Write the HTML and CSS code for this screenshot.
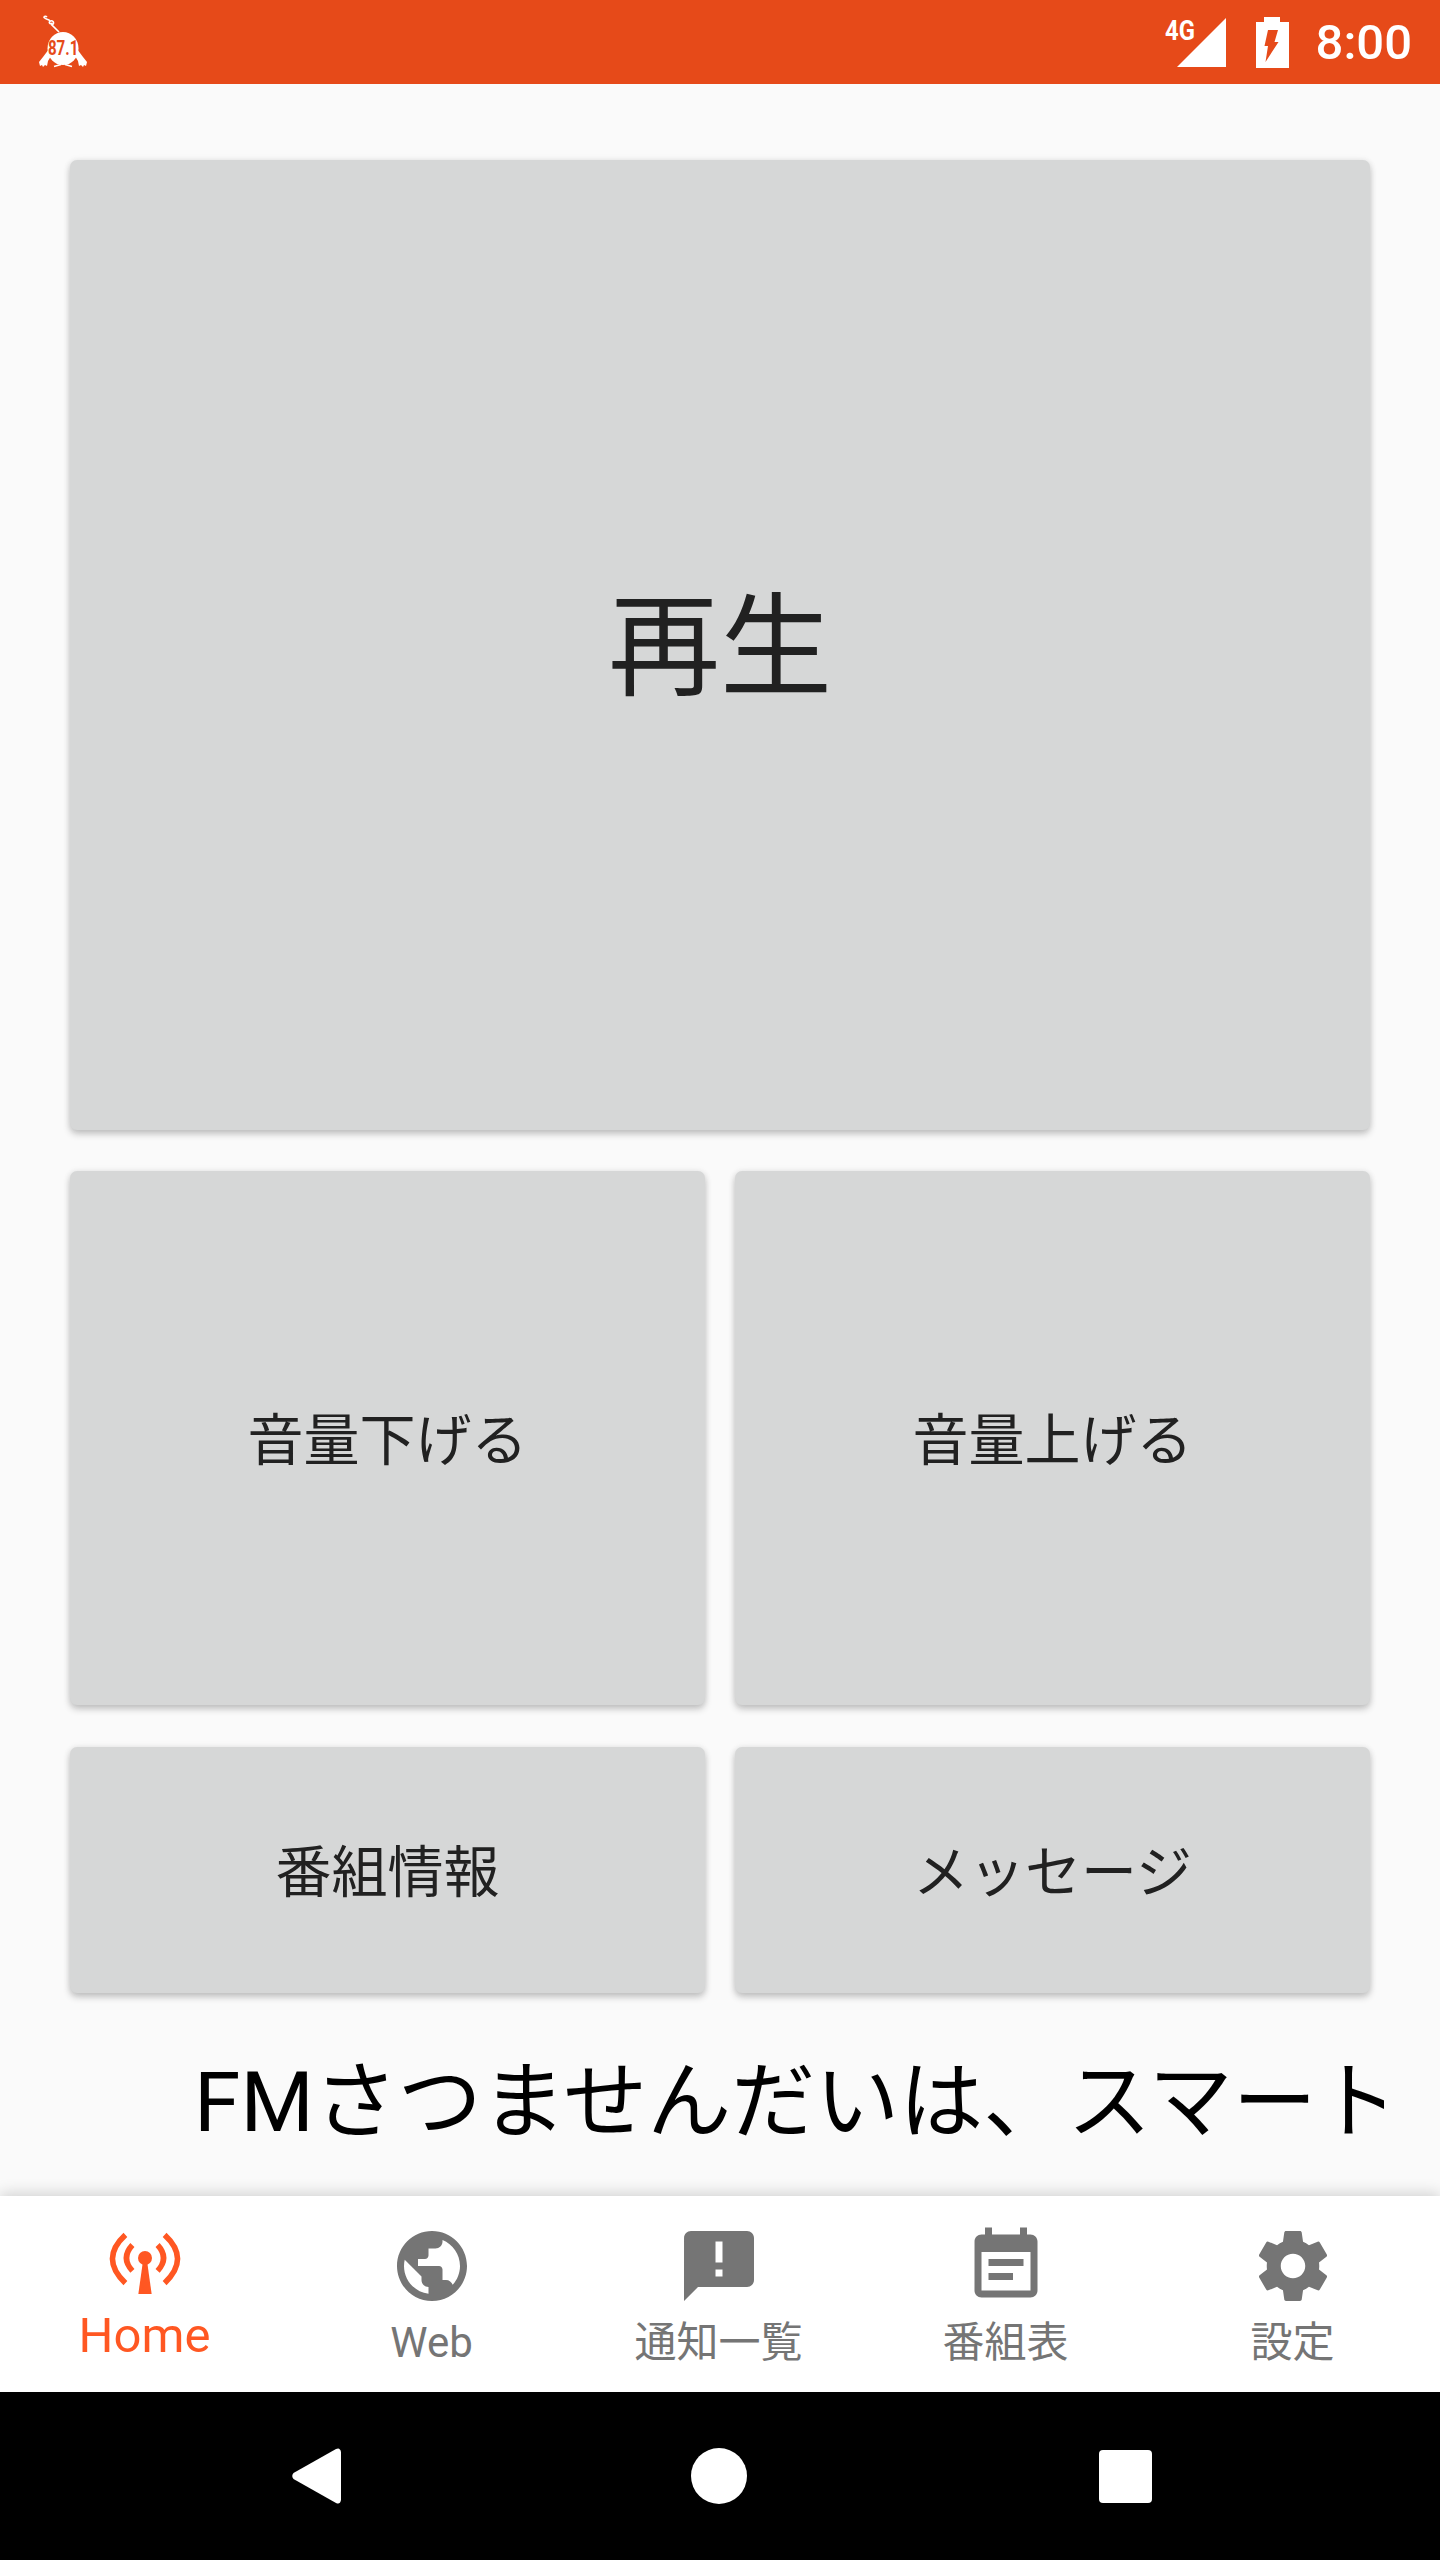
FILE: index.html
```html
<!DOCTYPE html>
<html lang="ja">
<head>
  <meta charset="UTF-8">
  <title>FMさつませんだい</title>
  <meta name="viewport" content="width=device-width, initial-scale=1">
  <link rel="stylesheet" href="styles.css">
</head>
<body>

  <div class="status-bar">
    <div class="status-logo">
      <svg class="logo-art" viewBox="0 0 60 60" width="60" height="60">
        <path class="logo-line" d="M26 20 L19 13 C22 11 20 8 17.5 9 C15 10 17 13 19 11 M17 9 C16 7 14 8 11 5.5 C11 4 13 4 14 5"/>
        <path class="logo-fill" d="M16 37 L10 45 L6 50 L7 54 L9 53 L10 55 L12 53 L14 54 L15 49 L18 44 Z"/>
        <path class="logo-fill" d="M44 37 L50 45 L54 50 L53 54 L51 53 L50 55 L48 53 L46 54 L45 49 L42 44 Z"/>
        <path class="logo-line" d="M21 54.5 L28 52.5 M39 54.5 L32 52.5"/>
        <ellipse class="logo-fill" cx="30" cy="36.5" rx="15.5" ry="16.5"/>
      </svg>
      <span class="logo-text">87.1</span>
    </div>
    <div class="status-right">
      <div class="signal">
        <span class="signal-type">4G</span>
        <svg viewBox="0 0 49 49" width="49" height="49"><path class="white" d="M0 49 L49 0 V49 Z"/></svg>
      </div>
      <svg class="battery" viewBox="0 0 33 51" width="33" height="51">
        <path class="white" d="M8 0 H24 V5 H33 V51 H0 V5 H8 Z"/>
        <path class="bolt" d="M12 13 H22 L18.5 25 H22.5 L9.5 45 L12 29 H8.5 Z"/>
      </svg>
      <span class="clock">8:00</span>
    </div>
  </div>

  <main class="content">
    <div class="button-grid">
      <button class="card play">再生</button>
      <button class="card mid">音量下げる</button>
      <button class="card mid">音量上げる</button>
      <button class="card low">番組情報</button>
      <button class="card low">メッセージ</button>
    </div>
    <div class="marquee">FMさつませんだいは、スマート</div>
  </main>

  <nav class="bottom-nav">
    <a class="nav-item active">
      <svg class="nav-icon" viewBox="0 0 24 24">
        <path class="antenna-arc" d="M6.4 5.1 Q-1 11.9 6.4 18.9 M17.6 5.1 Q25 11.9 17.6 18.9 M8.4 8 Q5 11.7 8.4 15.4 M15.6 8 Q19 11.7 15.6 15.4"/>
        <circle cx="12" cy="11.7" r="2"/>
        <path d="M11.5 12 H12.5 L13.9 22 H10.1 Z"/>
      </svg>
      <span class="nav-label">Home</span>
    </a>
    <a class="nav-item">
      <svg class="nav-icon" viewBox="0 0 24 24"><path d="M17.9 17.39c-.26-.8-1.01-1.39-1.9-1.39h-1v-3c0-.55-.45-1-1-1H8v-2h2c.55 0 1-.45 1-1V7h2c1.1 0 2-.9 2-2v-.41c2.93 1.19 5 4.06 5 7.41 0 2.08-.8 3.97-2.1 5.39zM11 19.93c-3.95-.49-7-3.85-7-7.93 0-.62.08-1.21.21-1.79L9 15v1c0 1.1.9 2 2 2v1.93zM12 2C6.48 2 2 6.48 2 12s4.48 10 10 10 10-4.48 10-10S17.52 2 12 2z"/></svg>
      <span class="nav-label">Web</span>
    </a>
    <a class="nav-item">
      <svg class="nav-icon" viewBox="0 0 24 24"><path d="M20 2H4c-1.1 0-1.99.9-1.99 2L2 22l4-4h14c1.1 0 2-.9 2-2V4c0-1.1-.9-2-2-2zm-7 9h-2V5h2v6zm0 4h-2v-2h2v2z"/></svg>
      <span class="nav-label">通知一覧</span>
    </a>
    <a class="nav-item">
      <svg class="nav-icon" viewBox="0 0 24 24"><path d="M17 10H7v2h10v-2zm2-7h-1V1h-2v2H8V1H6v2H5c-1.11 0-1.99.9-1.99 2L3 19c0 1.1.89 2 2 2h14c1.1 0 2-.9 2-2V5c0-1.1-.9-2-2-2zm0 16H5V8h14v11zm-5-5H7v2h7v-2z"/></svg>
      <span class="nav-label">番組表</span>
    </a>
    <a class="nav-item">
      <svg class="nav-icon" viewBox="0 0 24 24"><path d="M19.43 12.98c.04-.32.07-.64.07-.98s-.03-.66-.07-.98l2.11-1.65c.19-.15.24-.42.12-.64l-2-3.46c-.12-.22-.39-.3-.61-.22l-2.49 1c-.52-.4-1.08-.73-1.69-.98l-.38-2.65C14.46 2.18 14.25 2 14 2h-4c-.25 0-.46.18-.49.42l-.38 2.65c-.61.25-1.17.59-1.69.98l-2.49-1c-.23-.09-.49 0-.61.22l-2 3.46c-.13.22-.07.49.12.64l2.11 1.65c-.04.32-.07.65-.07.98s.03.66.07.98l-2.11 1.65c-.19.15-.24.42-.12.64l2 3.46c.12.22.39.3.61.22l2.49-1c.52.4 1.08.73 1.69.98l.38 2.65c.03.24.24.42.49.42h4c.25 0 .46-.18.49-.42l.38-2.65c.61-.25 1.17-.59 1.69-.98l2.49 1c.23.09.49 0 .61-.22l2-3.46c.12-.22.07-.49-.12-.64l-2.11-1.65zM12 15.5c-1.93 0-3.5-1.57-3.5-3.5s1.57-3.5 3.5-3.5 3.5 1.57 3.5 3.5-1.57 3.5-3.5 3.5z"/></svg>
      <span class="nav-label">設定</span>
    </a>
  </nav>

  <div class="system-bar">
    <svg class="sys-back" viewBox="0 0 50 56" width="50" height="56"><path d="M45 1 L2.5 25 Q0 28 2.5 31 L45 55 Q49 57 50 52 V4 Q49 -1 45 1 Z"/></svg>
    <div class="sys-home"></div>
    <div class="sys-recent"></div>
  </div>

</body>
</html>
```

FILE: styles.css
```css
html, body {
  margin: 0;
  height: 2560px;
  overflow: hidden;
}

body {
  display: flex;
  flex-direction: column;
  font-family: 'Roboto', 'Noto Sans CJK JP', sans-serif;
  background: #fafafa;
  color: #212121;
}

.status-bar {
  height: 84px;
  flex: none;
  display: flex;
  justify-content: space-between;
  background: #e64a19;
}

.status-logo {
  width: 60px;
  height: 60px;
  margin: 12px 0 0 33px;
  display: grid;
  place-items: center;
}

.logo-art, .logo-text {
  grid-area: 1 / 1;
}

.logo-fill, .white {
  fill: #fff;
}

.logo-line {
  fill: none;
  stroke: #fff;
  stroke-width: 1.6;
}

.logo-text {
  margin-top: 13px;
  font-size: 21px;
  line-height: 21px;
  font-weight: 700;
  color: #e64a19;
  transform: scaleX(.72);
}

.status-right {
  display: flex;
  align-items: center;
  padding-right: 28px;
}

.signal {
  display: flex;
  width: 61px;
  height: 49px;
  margin-right: 30px;
  justify-content: flex-end;
  position: relative;
}

.signal-type {
  position: absolute;
  left: 0;
  top: 0;
  font-size: 28px;
  line-height: 26px;
  font-weight: 700;
  color: #fff;
  transform: scaleX(.85);
  transform-origin: left;
}

.bolt {
  fill: #e64a19;
}

.clock {
  margin-left: 27px;
  font-size: 49px;
  font-weight: 500;
  color: #fff;
}

.content {
  flex: 1;
  min-height: 0;
  padding: 76px 70px 0;
  overflow: hidden;
}

.button-grid {
  display: grid;
  grid-template-columns: 1fr 1fr;
  grid-template-rows: 970px 534px 247px;
  gap: 41px 30px;
}

.card {
  border: none;
  border-radius: 7px;
  padding: 0;
  background: #d6d7d7;
  font-family: inherit;
  color: #212121;
  box-shadow: 0 4px 7px rgba(0, 0, 0, .22), 0 0 7px rgba(0, 0, 0, .07);
}

.play {
  grid-column: 1 / 3;
  padding-bottom: 14px;
  font-size: 112px;
}

.mid, .low {
  padding-bottom: 6px;
  font-size: 56px;
}

.low {
  margin-top: 1px;
}

.marquee {
  margin: 52px -14px 0 124px;
  font-size: 84px;
  line-height: 116px;
  white-space: nowrap;
  overflow: hidden;
  color: #000;
}

.bottom-nav {
  height: 196px;
  flex: none;
  display: flex;
  padding: 0 4px 0 1px;
  background: #fff;
  box-shadow: 0 -3px 14px rgba(0, 0, 0, .16);
  position: relative;
}

.nav-item {
  flex: 1;
  display: flex;
  flex-direction: column;
  align-items: center;
  padding-top: 28px;
  color: #757575;
  fill: #757575;
}

.nav-item.active {
  padding-top: 21px;
  color: #ff5722;
  fill: #ff5722;
}

.nav-icon {
  width: 84px;
  height: 84px;
  flex: none;
}

.antenna-arc {
  fill: none;
  stroke: #ff5722;
  stroke-width: 1.6;
}

.nav-label {
  margin-top: 7px;
  font-size: 42px;
  line-height: 56px;
}

.active .nav-label {
  font-size: 49px;
}

.system-bar {
  height: 168px;
  flex: none;
  display: flex;
  align-items: center;
  background: #000;
}

.sys-back {
  margin-left: 291px;
  fill: #fff;
}

.sys-home {
  width: 56px;
  height: 56px;
  margin-left: 350px;
  border-radius: 50%;
  background: #fff;
}

.sys-recent {
  width: 53px;
  height: 53px;
  margin-left: 352px;
  border-radius: 4px;
  background: #fff;
}
```
